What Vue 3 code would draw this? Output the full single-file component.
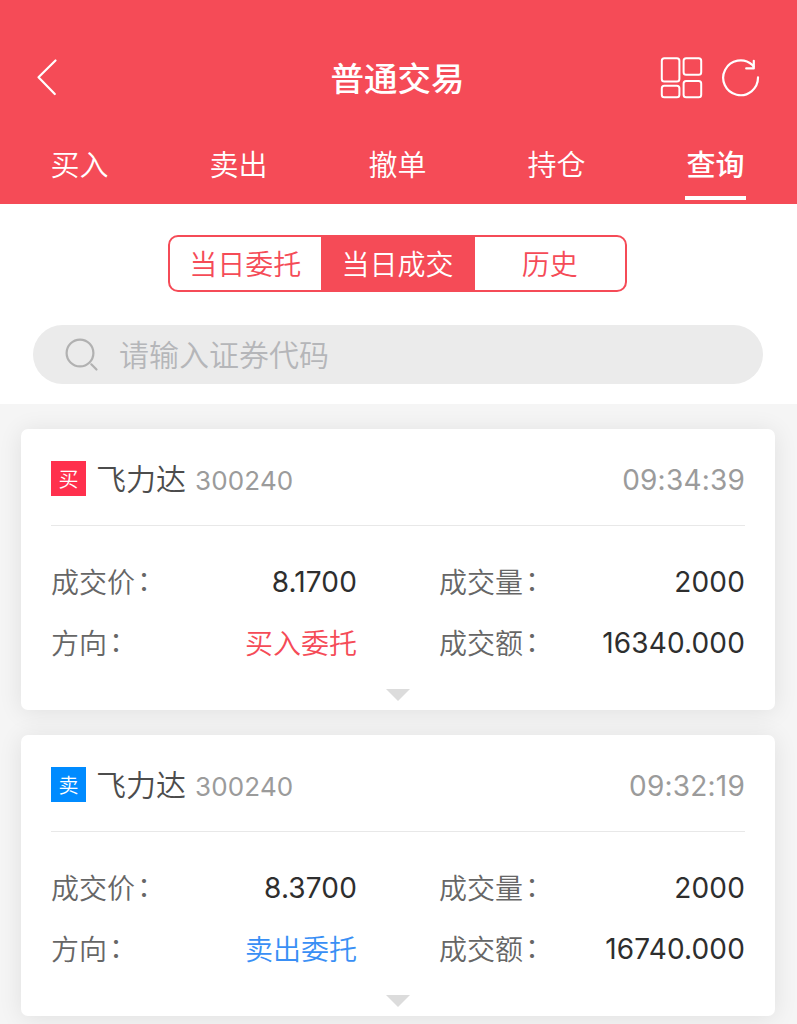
<template>
  <div class="trade-page">
    <header class="header">
      <div class="nav-bar">
        <svg class="icon-back" width="24" height="40" viewBox="0 0 24 40">
          <path d="M19.5 2.5L2.5 19.3L18.8 36" />
        </svg>
        <h1 class="title">普通交易</h1>
        <div class="actions">
          <svg class="icon-grid" width="44" height="44" viewBox="0 0 44 44">
            <rect x="2.8" y="2.2" width="17.6" height="23.4" rx="2.5" />
            <rect x="24.6" y="2.2" width="17.6" height="16.6" rx="2.5" />
            <rect x="2.8" y="29.8" width="17.6" height="11.4" rx="2.5" />
            <rect x="24.6" y="25" width="17.6" height="16.2" rx="2.5" />
          </svg>
          <svg class="icon-refresh" width="40" height="40" viewBox="0 0 40 40">
            <path d="M38 19.4A17.4 17.4 0 1 1 32.3 6.9L33.4 8.5" />
            <path d="M33.8 2.8V10.4H26.2" />
          </svg>
        </div>
      </div>
      <nav class="tabs">
        <div
          v-for="tab in tabs"
          :key="tab"
          class="tab"
          :class="{ active: tab === activeTab }"
          @click="activeTab = tab"
        >
          <span>{{ tab }}</span>
        </div>
      </nav>
    </header>

    <section class="filter">
      <div class="segment">
        <div
          v-for="item in segments"
          :key="item"
          class="segment-item"
          :class="{ active: item === activeSegment }"
          @click="activeSegment = item"
        >
          {{ item }}
        </div>
      </div>
      <label class="search">
        <svg class="icon-search" width="34" height="34" viewBox="0 0 34 34">
          <circle cx="15" cy="15" r="13.4" />
          <path d="M26.3 26.3L31.5 31.5" />
        </svg>
        <input v-model="keyword" type="text" placeholder="请输入证券代码" />
      </label>
    </section>

    <main class="list">
      <article v-for="order in orders" :key="order.time" class="card" :class="order.side">
        <div class="card-head">
          <span class="badge">{{ order.badge }}</span>
          <span class="name">{{ order.name }}</span>
          <span class="code">{{ order.code }}</span>
          <span class="time">{{ order.time }}</span>
        </div>
        <div class="card-body">
          <div class="field">
            <span class="label">成交价<i>：</i></span>
            <span class="value">{{ order.price }}</span>
          </div>
          <div class="field">
            <span class="label">成交量<i>：</i></span>
            <span class="value">{{ order.volume }}</span>
          </div>
          <div class="field">
            <span class="label">方向<i>：</i></span>
            <span class="value direction">{{ order.direction }}</span>
          </div>
          <div class="field">
            <span class="label">成交额<i>：</i></span>
            <span class="value">{{ order.amount }}</span>
          </div>
        </div>
        <div class="expand"></div>
      </article>
    </main>
  </div>
</template>

<script setup>
import { ref } from "vue";

const tabs = ["买入", "卖出", "撤单", "持仓", "查询"];
const activeTab = ref("查询");

const segments = ["当日委托", "当日成交", "历史"];
const activeSegment = ref("当日成交");

const keyword = ref("");

const orders = ref([
  {
    side: "buy",
    badge: "买",
    name: "飞力达",
    code: "300240",
    time: "09:34:39",
    price: "8.1700",
    volume: "2000",
    direction: "买入委托",
    amount: "16340.000",
  },
  {
    side: "sell",
    badge: "卖",
    name: "飞力达",
    code: "300240",
    time: "09:32:19",
    price: "8.3700",
    volume: "2000",
    direction: "卖出委托",
    amount: "16740.000",
  },
]);
</script>

<style>
body {
  margin: 0;
  background: #f5f5f5;
}
</style>

<style scoped>
.trade-page {
  box-sizing: border-box;
  height: 1024px;
  overflow: hidden;
  background: #f5f5f5;
  font-family: Inter, "Noto Sans CJK SC", sans-serif;
}

.header {
  box-sizing: border-box;
  height: 204px;
  padding-top: 46px;
  background: #f54b57;
  color: #fff;
}

.nav-bar {
  display: grid;
  grid-template-columns: 1fr auto 1fr;
  align-items: center;
  height: 64px;
  padding: 0 37px 0 36px;
}

.nav-bar svg,
.icon-search {
  fill: none;
  stroke: #fff;
  stroke-width: 2.2;
  stroke-linecap: round;
  stroke-linejoin: round;
}

.title {
  margin: 0 1px 0 0;
  padding-top: 2px;
  font-size: 33.5px;
  font-weight: 500;
  line-height: 62px;
}

.actions {
  display: flex;
  align-items: center;
  justify-content: flex-end;
  gap: 17px;
}

.nav-bar .icon-grid {
  stroke-width: 2;
}

.tabs {
  display: flex;
  height: 90px;
  padding-right: 2px;
}

.tab {
  flex: 1;
  display: flex;
  justify-content: center;
  font-size: 29px;
  font-weight: 350;
}

.tab span {
  box-sizing: border-box;
  height: 90px;
  padding: 0 1.5px;
  line-height: 111px;
}

.tab.active span {
  border-bottom: 4px solid #fff;
  font-weight: 500;
}

.filter {
  box-sizing: border-box;
  height: 200px;
  padding: 31px 34px 0 33px;
  background: #fff;
}

.segment {
  box-sizing: border-box;
  display: flex;
  width: 459px;
  height: 57px;
  margin-left: 135px;
  overflow: hidden;
  border: 2px solid #f54b57;
  border-radius: 10px;
}

.segment-item {
  flex: 1 1 0;
  color: #f54b57;
  font-size: 28px;
  font-weight: 350;
  line-height: 56px;
  text-align: center;
}

.segment-item.active {
  flex: 0 0 154px;
  background: #f54b57;
  color: #fff;
}

.search {
  box-sizing: border-box;
  display: flex;
  align-items: center;
  height: 59px;
  margin-top: 33px;
  padding: 0 32px;
  border-radius: 30px;
  background: #ebebeb;
}

.icon-search {
  stroke: #b1b1b1;
}

.search input {
  flex: 1;
  margin-left: 20px;
  padding: 1px 0 0;
  border: 0;
  outline: 0;
  background: none;
  font: inherit;
  font-size: 30px;
  font-weight: 350;
}

.search input::placeholder {
  color: #b5b6b9;
}

.list {
  display: flex;
  flex-direction: column;
  gap: 25px;
  padding: 25px 22px 0 21px;
}

.card {
  box-sizing: border-box;
  height: 281px;
  padding: 0 30px;
  border-radius: 7px;
  background: #fff;
  box-shadow: 0 2px 24px rgba(0, 0, 0, 0.09);
}

.card-head {
  display: flex;
  align-items: center;
  height: 96px;
  border-bottom: 1px solid #e8e8e8;
  line-height: 40px;
}

.badge {
  width: 35px;
  height: 35px;
  margin-top: 3px;
  background: #ff304d;
  color: #fff;
  font-size: 20px;
  font-weight: 350;
  line-height: 38px;
  text-align: center;
}

.sell .badge {
  background: #008bff;
}

.name {
  margin-top: 4px;
  margin-left: 10px;
  color: #4c4c4c;
  font-size: 30px;
  font-weight: 350;
}

.code {
  margin-top: 8px;
  margin-left: 9px;
  color: #9b9b9b;
  font-size: 26px;
  letter-spacing: 0.15px;
}

.time {
  margin-top: 5px;
  margin-left: auto;
  color: #9b9b9b;
  font-size: 28px;
  letter-spacing: 0.2px;
}

.card-body {
  display: grid;
  grid-template-columns: 1fr 1fr;
  gap: 21px 82px;
  padding-top: 36px;
}

.field {
  display: flex;
  justify-content: space-between;
  height: 40px;
  font-size: 28px;
  line-height: 40px;
}

.label {
  padding-top: 1px;
  color: #666;
  font-weight: 350;
}

.label i {
  margin-left: 2px;
  font-style: normal;
  line-height: 0;
  vertical-align: 2px;
}

.value {
  color: #2e2e2e;
  letter-spacing: 0.15px;
}

.direction {
  padding-top: 1px;
  font-weight: 350;
  letter-spacing: 0;
}

.buy .direction {
  color: #f54b57;
}

.sell .direction {
  color: #398ff5;
}

.expand {
  width: 24px;
  height: 12px;
  margin: 26px auto 0;
  background: #dcdcdc;
  clip-path: polygon(0 0, 100% 0, 50% 100%);
}
</style>
